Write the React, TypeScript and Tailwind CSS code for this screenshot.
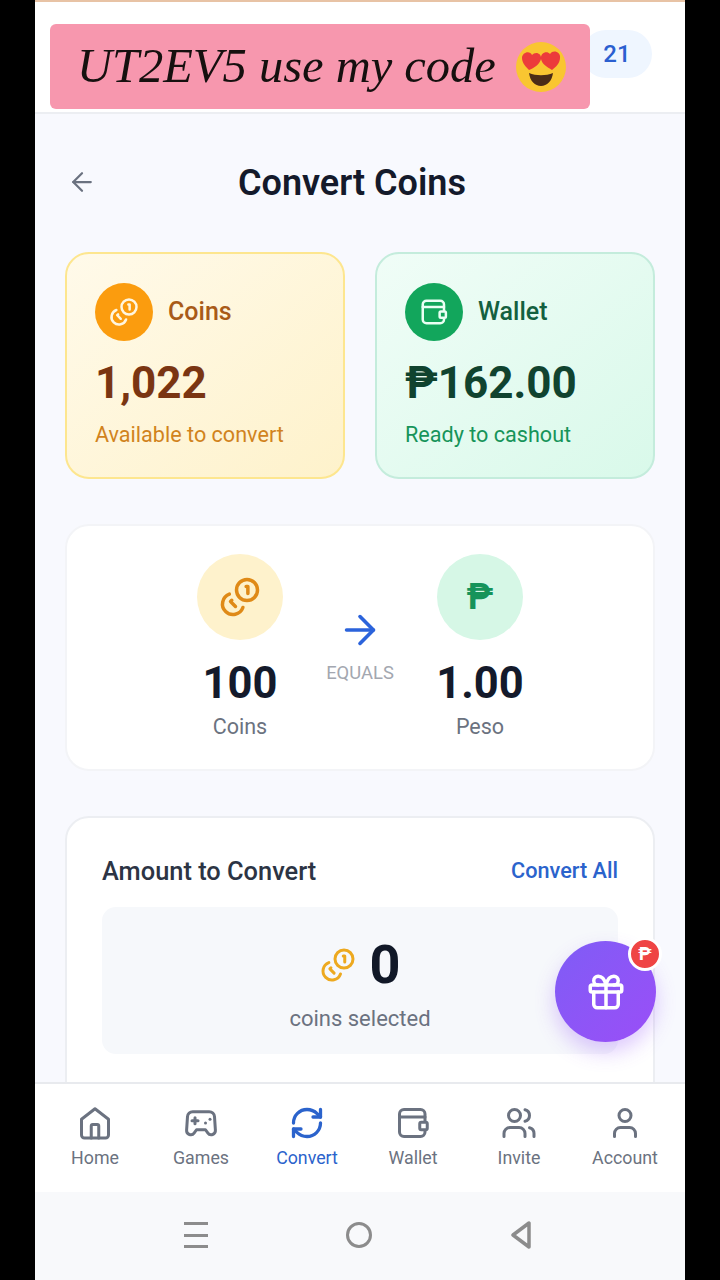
import React from 'react';
import { ArrowLeft, ArrowRight, Gift, RefreshCw, User, Users } from 'lucide-react';

const CoinsIcon = ({ size, className }: { size: number; className?: string }) => (
  <svg width={size} height={size} viewBox="0 0 24 24" fill="none" stroke="currentColor" strokeWidth="2" strokeLinecap="round" strokeLinejoin="round" className={className}>
    <circle cx="16" cy="8" r="6" />
    <path d="M5.91 10.37A6 6 0 1 0 13.66 18" />
    <path d="M15.5 6h1v4" />
    <path d="m7.29 13.88-.7.71 2.82 2.82" />
  </svg>
);

const WalletIcon = ({ size, className }: { size: number; className?: string }) => (
  <svg width={size} height={size} viewBox="0 0 24 24" fill="none" stroke="currentColor" strokeWidth="2" strokeLinecap="round" strokeLinejoin="round" className={className}>
    <path d="M20 11V6a3 3 0 0 0-3-3H6a3 3 0 0 0-3 3v12a3 3 0 0 0 3 3h11a3 3 0 0 0 3-3v-1" />
    <path d="M3 8h17" />
    <rect x="16.5" y="11.5" width="5" height="5" rx="1" />
  </svg>
);

const HomeIcon = () => (
  <svg width="36" height="36" viewBox="0 0 24 24" fill="none" stroke="currentColor" strokeWidth="2" strokeLinecap="round" strokeLinejoin="round">
    <path d="M3 9.5 12 2.5l9 7V20a2 2 0 0 1-2 2H5a2 2 0 0 1-2-2Z" />
    <path d="M9.5 22v-8a1 1 0 0 1 1-1h3a1 1 0 0 1 1 1v8" />
  </svg>
);

const GamesIcon = () => (
  <svg width="36" height="36" viewBox="0 0 24 24" fill="none" stroke="currentColor" strokeWidth="2" strokeLinecap="round" strokeLinejoin="round">
    <path d="M6.5 4.5h11a3.5 3.5 0 0 1 3.5 3.3l.6 9a2.8 2.8 0 0 1-5.1 1.8L15 16.5H9l-1.5 2.1a2.8 2.8 0 0 1-5.1-1.8l.6-9a3.5 3.5 0 0 1 3.5-3.3Z" />
    <path d="M6 10.5h4" />
    <path d="M8 8.5v4" />
    <path d="M15 12h.01" />
    <path d="M18 9.5h.01" />
  </svg>
);

const HeartEyes = () => (
  <svg width="54" height="54" viewBox="0 0 54 54">
    <circle cx="27" cy="27" r="25" fill="#f9c631" />
    <path d="M8 18c0-6 8-8 10-3 3-4 10-2 9 4-1 5-7 9-12 11-3-3-7-7-7-12Z" fill="#ec3b3b" />
    <path d="M46 18c1-6-7-9-10-4-3-4-10-1-9 5 1 5 6 8 11 11 4-3 8-7 8-12Z" fill="#ec3b3b" />
    <path d="M15 33c7 3 17 3 24 0-1 8-6 13-12 13s-11-5-12-13Z" fill="#4a2c17" />
  </svg>
);

const navItems = [
  { label: 'Home', icon: <HomeIcon /> },
  { label: 'Games', icon: <GamesIcon /> },
  { label: 'Convert', icon: <RefreshCw size={36} strokeWidth={2.2} />, active: true },
  { label: 'Wallet', icon: <WalletIcon size={36} /> },
  { label: 'Invite', icon: <Users size={36} strokeWidth={2} /> },
  { label: 'Account', icon: <User size={36} strokeWidth={2} /> },
];

export default function App() {
  return (
    <div className="flex h-[1280px] w-[720px] justify-center overflow-hidden bg-black font-['Roboto',sans-serif]">
      <div className="relative flex h-full w-[650px] flex-col overflow-hidden bg-[#f8f9fe]">
        {/* top bar */}
        <div className="flex h-[114px] shrink-0 justify-end border-t-2 border-b-2 border-t-[#e8c3a5] border-b-[#eceef2] bg-white pt-[28px] pr-[33px]">
          <div className="flex h-[48px] w-[70px] items-center justify-center rounded-full bg-[#eff6ff] text-[24px] font-medium text-[#2b5fd0]">21</div>
        </div>

        <div className="absolute top-[24px] left-[15px] flex h-[85px] w-[540px] items-center rounded-[6px] bg-[#f797ae] pl-[27px]">
          <span className="font-['Liberation_Serif',serif] text-[48.5px] text-[#16100f] italic">UT2EV5 use my code</span>
          <span className="ml-[18px]"><HeartEyes /></span>
        </div>

        {/* page */}
        <div className="min-h-0 flex-1 overflow-hidden px-[30px]">
          <div className="flex h-[138px] items-start pt-[49px]">
            <ArrowLeft size={30} strokeWidth={1.8} className="mt-[4px] ml-[2px] text-[#6b7280]" />
            <h1 className="ml-[141px] text-[36px] leading-[40px] font-semibold text-[#141a2b]">Convert Coins</h1>
          </div>

          <div className="grid grid-cols-2 gap-[30px]">
            <div className="h-[227px] rounded-[24px] border-2 border-[#fde68f] bg-gradient-to-br from-[#fffaea] to-[#fef2cb] pt-[29px] pl-[28px]">
              <div className="flex items-center gap-[15px]">
                <div className="flex h-[58px] w-[58px] items-center justify-center rounded-full bg-[#fb9c0e] text-[#fff6df]">
                  <CoinsIcon size={30} />
                </div>
                <span className="text-[25px] font-medium text-[#a85a18]">Coins</span>
              </div>
              <div className="mt-[18px] text-[44px] leading-[48px] font-bold text-[#7a3512]">1,022</div>
              <div className="mt-[15px] text-[21.6px] leading-[26px] text-[#d1831d]">Available to convert</div>
            </div>
            <div className="h-[227px] rounded-[24px] border-2 border-[#c4ecdc] bg-gradient-to-br from-[#f0fdf7] to-[#d9f9ea] pt-[29px] pl-[28px]">
              <div className="flex items-center gap-[15px]">
                <div className="flex h-[58px] w-[58px] items-center justify-center rounded-full bg-[#12a65c] text-[#eafff4]">
                  <WalletIcon size={30} />
                </div>
                <span className="text-[25px] font-medium text-[#14603f]">Wallet</span>
              </div>
              <div className="mt-[18px] text-[44px] leading-[48px] font-bold text-[#10432f]">₱162.00</div>
              <div className="mt-[15px] text-[21.6px] leading-[26px] text-[#16945a]">Ready to cashout</div>
            </div>
          </div>

          <div className="mt-[45px] flex h-[247px] justify-center rounded-[24px] border-2 border-[#f3f4f7] bg-white pt-[28px]">
            <div className="flex w-[86px] flex-col items-center">
              <div className="flex h-[86px] w-[86px] items-center justify-center rounded-full bg-[#fef2cc] text-[#df8a17]">
                <CoinsIcon size={42} />
              </div>
              <div className="mt-[20px] text-[43.5px] leading-[48px] font-bold text-[#141a2b]">100</div>
              <div className="mt-[6px] text-[21.5px] leading-[26px] text-[#6b7280]">Coins</div>
            </div>
            <div className="flex w-[154px] flex-col items-center pt-[53px]">
              <ArrowRight size={46} strokeWidth={1.9} className="text-[#2b63db]" />
              <div className="mt-[9px] text-[18.4px] leading-[22px] text-[#a3a7b0]">EQUALS</div>
            </div>
            <div className="flex w-[86px] flex-col items-center">
              <div className="flex h-[86px] w-[86px] items-center justify-center rounded-full bg-[#d6f7e6] text-[36px] font-bold text-[#16935a]">₱</div>
              <div className="mt-[20px] text-[43.5px] leading-[48px] font-bold whitespace-nowrap text-[#141a2b]">1.00</div>
              <div className="mt-[6px] text-[21.5px] leading-[26px] text-[#6b7280]">Peso</div>
            </div>
          </div>

          <div className="mt-[45px] h-[400px] rounded-[24px] border-2 border-[#eceef2] bg-white px-[35px] pt-[37px]">
            <div className="flex items-center justify-between">
              <span className="text-[25.4px] leading-[32px] font-medium text-[#2c3444]">Amount to Convert</span>
              <span className="text-[21.7px] leading-[32px] font-medium text-[#2b63cc]">Convert All</span>
            </div>
            <div className="mt-[20px] flex h-[147px] flex-col items-center rounded-[14px] bg-[#f6f8fb] pt-[30px]">
              <div className="flex items-center gap-[14px]">
                <CoinsIcon size={36} className="text-[#eda91f]" />
                <span className="text-[54px] leading-[56px] font-bold text-[#111827]">0</span>
              </div>
              <div className="mt-[13px] text-[22px] leading-[26px] text-[#6b7280]">coins selected</div>
            </div>
          </div>
        </div>

        {/* gift button */}
        <div className="absolute top-[941px] left-[520px] flex h-[101px] w-[101px] items-center justify-center rounded-full bg-gradient-to-br from-[#7f5cf6] to-[#9a4ef7] text-white shadow-[0_10px_20px_rgba(147,78,247,0.3)]">
          <Gift size={42} strokeWidth={2} />
          <div className="absolute -top-[4px] -right-[6px] flex h-[34px] w-[34px] items-center justify-center rounded-full border-[3px] border-white bg-[#ef4444] text-[18px] leading-none font-bold text-white">₱</div>
        </div>

        {/* bottom nav */}
        <div className="grid h-[110px] shrink-0 grid-cols-6 border-t-2 border-[#e8eaee] bg-white px-[7px] pt-[21px]">
          {navItems.map(item => (
            <div key={item.label} className={`flex flex-col items-center ${item.active ? 'text-[#2b63cc]' : 'text-[#6b7280]'}`}>
              {item.icon}
              <span className="mt-[6px] text-[17.8px] leading-[22px]">{item.label}</span>
            </div>
          ))}
        </div>

        {/* android buttons */}
        <div className="flex h-[88px] shrink-0 items-center justify-center bg-[#f8f9fb] pr-[4px] pb-[2px] text-[#8c8c8c]">
          <div className="flex h-[26px] w-[24px] flex-col justify-between">
            <div className="h-[3px] bg-[#8c8c8c]" />
            <div className="h-[3px] bg-[#8c8c8c]" />
            <div className="h-[3px] bg-[#8c8c8c]" />
          </div>
          <div className="mr-[138px] ml-[138px] h-[26px] w-[26px] rounded-full border-[3px] border-[#8c8c8c]" />
          <svg width="22" height="28" viewBox="0 0 22 28" fill="none" stroke="#8c8c8c" strokeWidth="3.5" strokeLinejoin="round">
            <path d="M19 2v24L3 14Z" />
          </svg>
        </div>
      </div>
    </div>
  );
}
